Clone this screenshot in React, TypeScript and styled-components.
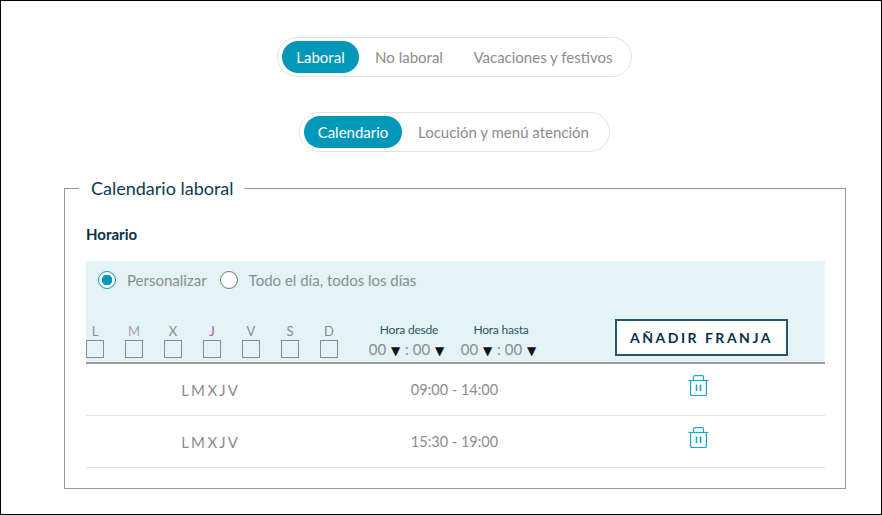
import React from 'react'
import styled, { createGlobalStyle } from 'styled-components'

const GlobalStyle = createGlobalStyle`
  html, body {
    margin: 0;
    padding: 0;
    background: #fff;
    font-family: "Lato", "Liberation Sans", sans-serif;
  }
`

const Page = styled.div`
  box-sizing: border-box;
  width: 882px;
  height: 515px;
  border: 1px solid #000;
  padding-top: 36px;
  overflow: hidden;
`

const TabRow = styled.div<{ $mb: number }>`
  display: flex;
  justify-content: center;
  padding-left: 27px;
  margin-bottom: ${({ $mb }) => $mb}px;
`

const Tabs = styled.div`
  box-sizing: border-box;
  display: flex;
  align-items: center;
  height: 40px;
  padding: 0 4px;
  border: 1px solid #e2e2e2;
  border-radius: 20px;
`

const Tab = styled.div<{ $active?: boolean; $w: number }>`
  width: ${({ $w }) => $w}px;
  height: 32px;
  line-height: 32px;
  text-align: center;
  font-size: 15px;
  white-space: nowrap;
  border-radius: 16px;
  color: ${({ $active }) => ($active ? '#fff' : '#8c8c8c')};
  background: ${({ $active }) => ($active ? '#0097b9' : 'transparent')};
`

const Box = styled.fieldset`
  box-sizing: border-box;
  width: 782px;
  height: 312px;
  margin: 0 0 0 63px;
  padding: 26px 20px 0 21px;
  border: 1px solid #999;
`

const Legend = styled.legend`
  margin-left: -7px;
  padding: 0 10px 0 12px;
  font-size: 18px;
  color: #0b3c50;
`

const Heading = styled.div`
  font-size: 15px;
  font-weight: 700;
  color: #03324a;
  height: 19px;
  line-height: 19px;
  margin-bottom: 17px;
`

const Panel = styled.div`
  box-sizing: border-box;
  height: 103px;
  background: #e3f3f6;
  border-bottom: 2px solid #999;
  padding-top: 9px;
`

const RadioRow = styled.div`
  display: flex;
  align-items: center;
  height: 20px;
  padding-left: 12px;
  font-size: 15px;
  color: #8c8c8c;
`

const Radio = styled.span<{ $on?: boolean }>`
  box-sizing: border-box;
  width: 18px;
  height: 18px;
  margin-right: 11px;
  border-radius: 50%;
  border: 1px solid ${({ $on }) => ($on ? '#0097b9' : '#777')};
  background: ${({ $on }) => ($on ? 'radial-gradient(circle, #0097b9 0 5px, #fff 5.5px)' : '#fff')};
`

const RadioLabel = styled.span`
  margin-right: 13px;
`

const Controls = styled.div`
  display: flex;
  align-items: flex-end;
  margin-top: 29px;
`

const Days = styled.div`
  display: flex;
  gap: 21px;
  width: 277px;
`

const Day = styled.div<{ $color?: string }>`
  width: 18px;
  text-align: center;
  font-size: 13px;
  line-height: 15px;
  color: ${({ $color }) => $color ?? '#8c8c8c'};
`

const Check = styled.div`
  box-sizing: border-box;
  width: 18px;
  height: 18px;
  margin-top: 1px;
  background: #e3f3f6;
  border: 1px solid #8c8c8c;
`

const TimeGroup = styled.div`
  width: 92px;
  margin-bottom: -3px;
  text-align: center;
`

const TimeLabel = styled.div`
  margin-bottom: 2px;
  font-size: 12px;
  line-height: 15px;
  letter-spacing: -0.2px;
  color: #2c5568;
`

const TimeValue = styled.div`
  padding-right: 4px;
  font-size: 15px;
  line-height: 20px;
  white-space: nowrap;
  color: #8c8c8c;
  b {
    margin: 0 1px;
    font-size: 12px;
    font-weight: 400;
    color: #111;
    font-family: "DejaVu Sans", sans-serif;
  }
`

const AddButton = styled.div`
  box-sizing: border-box;
  width: 173px;
  height: 37px;
  margin-left: 68px;
  margin-bottom: 2px;
  line-height: 33px;
  text-align: center;
  background: #fff;
  border: 2px solid #1f5a70;
  font-size: 14px;
  font-weight: 700;
  letter-spacing: 2.5px;
  color: #03324a;
`

const Row = styled.div`
  display: grid;
  grid-template-columns: 247px 243px 1fr;
  align-items: center;
  height: 52px;
  box-sizing: border-box;
  border-bottom: 1px solid #e2e2e2;
  font-size: 15px;
  color: #8c8c8c;
  text-align: center;
`

const RowDays = styled.div`
  word-spacing: -1.3px;
`

const RowHours = styled.div`
  font-size: 14.5px;
`

const RowIcon = styled.div`
  display: flex;
  padding-left: 112px;
  margin-top: -9px;
`

const TrashIcon = () => (
  <svg width="21" height="21" viewBox="0 0 21 21" fill="none" stroke="#14a8c8" strokeWidth="1.2">
    <path d="M0.5 5.5h20" />
    <path d="M5.5 5.5V2A1.5 1.5 0 0 1 7 0.6h7A1.5 1.5 0 0 1 15.5 2v3.5" />
    <path d="M2.6 5.5v13.4a1.6 1.6 0 0 0 1.6 1.6h12.6a1.6 1.6 0 0 0 1.6-1.6V5.5" />
    <path d="M8.5 9.5v6.5M12.5 9.5v6.5" strokeWidth="1.6" />
  </svg>
)

const dayLetters = [
  { l: 'L' },
  { l: 'M', color: '#b39db0' },
  { l: 'X' },
  { l: 'J', color: '#a35bb0' },
  { l: 'V' },
  { l: 'S' },
  { l: 'D' },
]

const schedule = [
  { days: 'L M X J V', hours: '09:00 - 14:00' },
  { days: 'L M X J V', hours: '15:30 - 19:00' },
]

const App: React.FC = () => (
  <Page>
    <GlobalStyle />
    <TabRow $mb={35}>
      <Tabs>
        <Tab $active $w={77}>Laboral</Tab>
        <Tab $w={100}>No laboral</Tab>
        <Tab $w={168}>Vacaciones y festivos</Tab>
      </Tabs>
    </TabRow>
    <TabRow $mb={25}>
      <Tabs>
        <Tab $active $w={98}>Calendario</Tab>
        <Tab $w={203}>Locución y menú atención</Tab>
      </Tabs>
    </TabRow>
    <Box>
      <Legend>Calendario laboral</Legend>
      <Heading>Horario</Heading>
      <Panel>
        <RadioRow>
          <Radio $on />
          <RadioLabel>Personalizar</RadioLabel>
          <Radio />
          <RadioLabel>Todo el día, todos los días</RadioLabel>
        </RadioRow>
        <Controls>
          <Days>
            {dayLetters.map(d => (
              <Day key={d.l} $color={d.color}>
                {d.l}
                <Check />
              </Day>
            ))}
          </Days>
          <TimeGroup>
            <TimeLabel>Hora desde</TimeLabel>
            <TimeValue>00 <b>▼</b> : 00 <b>▼</b></TimeValue>
          </TimeGroup>
          <TimeGroup>
            <TimeLabel>Hora hasta</TimeLabel>
            <TimeValue>00 <b>▼</b> : 00 <b>▼</b></TimeValue>
          </TimeGroup>
          <AddButton>AÑADIR FRANJA</AddButton>
        </Controls>
      </Panel>
      {schedule.map(s => (
        <Row key={s.hours}>
          <RowDays>{s.days}</RowDays>
          <RowHours>{s.hours}</RowHours>
          <RowIcon><TrashIcon /></RowIcon>
        </Row>
      ))}
    </Box>
  </Page>
)

export default App
